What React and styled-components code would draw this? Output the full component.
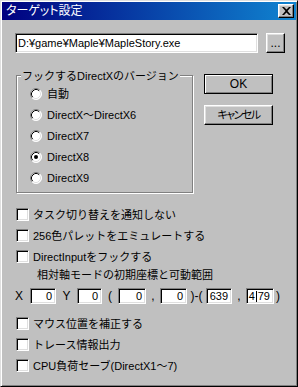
import React from "react";
import styled, { createGlobalStyle } from "styled-components";

const GlobalStyle = createGlobalStyle`
  html, body {
    margin: 0;
    padding: 0;
    background: #c0c0c0;
  }
  body {
    font-family: "Liberation Sans", "Noto Sans CJK JP", sans-serif;
    font-size: 11px;
    color: #000;
  }
`;

const Window = styled.div`
  box-sizing: border-box;
  width: 298px;
  height: 387px;
  padding: 1px;
  background: #c0c0c0;
  border: 1px solid;
  border-color: #dfdfdf #000 #000 #dfdfdf;
  box-shadow: inset 1px 1px #fff, inset -1px -1px #808080;
  display: flex;
  flex-direction: column;
`;

const TitleBar = styled.div`
  height: 18px;
  padding: 0 2px;
  display: flex;
  align-items: center;
  justify-content: space-between;
  background: linear-gradient(to right, #000080, #1084d0);
`;

const TitleText = styled.span`
  color: #fff;
  font-size: 12px;
  line-height: 18px;
  padding-left: 2px;
  font-feature-settings: "palt" 1;
`;

const raised = `
  border: 1px solid;
  border-color: #fff #000 #000 #fff;
  box-shadow: inset -1px -1px #808080, inset 1px 1px #dfdfdf;
  background: #c0c0c0;
`;

const sunken = `
  border: 1px solid;
  border-color: #808080 #fff #fff #808080;
  box-shadow: inset 1px 1px #000, inset -1px -1px #dfdfdf;
  background: #fff;
`;

const CloseBox = styled.div`
  box-sizing: border-box;
  width: 16px;
  height: 14px;
  ${raised}
  display: flex;
  align-items: center;
  justify-content: center;
`;

const Body = styled.div`
  padding: 13px 0 0 13px;
  display: flex;
  flex-direction: column;
`;

const PathRow = styled.div`
  display: flex;
  gap: 8px;
  height: 20px;
`;

const PathField = styled.div`
  box-sizing: border-box;
  width: 243px;
  height: 20px;
  ${sunken}
  padding-left: 2px;
  line-height: 18px;
  white-space: nowrap;
`;

const Button = styled.div`
  box-sizing: border-box;
  width: ${(p) => p.w}px;
  height: 20px;
  ${raised}
  ${(p) =>
    p.primary &&
    `
    border-color: #000;
    box-shadow: inset 1px 1px #fff, inset -1px -1px #808080;
  `}
  display: flex;
  align-items: center;
  justify-content: center;
  line-height: 16px;
  font-size: 12px;
`;

const NarrowText = styled.span`
  font-size: 11px;
  letter-spacing: -1.5px;
  font-feature-settings: "palt" 1;
`;

const MidRow = styled.div`
  display: flex;
  align-items: flex-start;
  margin-top: 21px;
`;

const GroupBox = styled.div`
  position: relative;
  box-sizing: border-box;
  width: 177px;
  height: 118px;
  margin: 1px 0 0 1px;
  padding: 7px 0 0 13px;
  border: 1px solid #808080;
  box-shadow: inset 1px 1px #fff, 1px 1px #fff;
`;

const Legend = styled.span`
  position: absolute;
  top: -8px;
  left: 4px;
  padding: 0 1px;
  background: #c0c0c0;
  line-height: 16px;
  white-space: nowrap;
`;

const RadioRow = styled.div`
  height: 21px;
  display: flex;
  align-items: center;
  gap: 5px;
  line-height: 14px;
`;

const ButtonCol = styled.div`
  margin-left: 11px;
  display: flex;
  flex-direction: column;
  gap: 11px;
`;

const CheckList = styled.div`
  margin-top: ${(p) => p.top}px;
  display: flex;
  flex-direction: column;
`;

const CheckRow = styled.div`
  height: 21px;
  margin-left: 1px;
  display: flex;
  align-items: center;
  gap: 4px;
  line-height: 14px;
  white-space: nowrap;
`;

const Box = styled.div`
  box-sizing: border-box;
  width: 13px;
  height: 13px;
  ${sunken}
`;

const RangeLabel = styled.div`
  height: 16px;
  line-height: 16px;
  margin-left: 22px;
`;

const CoordRow = styled.div`
  margin-top: 5px;
  height: 16px;
  display: flex;
  align-items: center;
`;

const Sep = styled.span`
  width: ${(p) => p.w}px;
  text-align: ${(p) => p.align || "center"};
  line-height: 16px;
  font-size: 12px;
`;

const Field = styled.div`
  box-sizing: border-box;
  width: ${(p) => p.w}px;
  height: 16px;
  ${sunken}
  padding-right: 3px;
  text-align: right;
  line-height: 14px;
`;

const Caret = styled.span`
  display: inline-block;
  width: 1px;
  height: 11px;
  margin: 0 1px;
  background: #000;
  vertical-align: -2px;
`;

const Radio = ({ checked }) => (
  <svg width="12" height="12" viewBox="0 0 12 12">
    <circle cx="6" cy="6" r="5.5" fill="#fff" />
    <path d="M2.11 9.89 A5.5 5.5 0 0 1 9.89 2.11" fill="none" stroke="#808080" />
    <path d="M2.82 9.18 A4.5 4.5 0 0 1 9.18 2.82" fill="none" stroke="#000" />
    <path d="M9.89 2.11 A5.5 5.5 0 0 1 2.11 9.89" fill="none" stroke="#fff" />
    <path d="M9.18 2.82 A4.5 4.5 0 0 1 2.82 9.18" fill="none" stroke="#dfdfdf" />
    {checked && <circle cx="6" cy="6" r="2" fill="#000" />}
  </svg>
);

const versions = [
  "自動",
  "DirectX～DirectX6",
  "DirectX7",
  "DirectX8",
  "DirectX9",
];

const Check = ({ children }) => (
  <CheckRow>
    <Box />
    <span>{children}</span>
  </CheckRow>
);

export default function App() {
  return (
    <>
      <GlobalStyle />
      <Window>
        <TitleBar>
          <TitleText>ターゲット設定</TitleText>
          <CloseBox>
            <svg width="9" height="8" viewBox="0 0 9 8">
              <path d="M0 0h2l2.5 2.6L7 0h2L5.5 4 9 8H7L4.5 5.4 2 8H0l3.5-4z" fill="#000" />
            </svg>
          </CloseBox>
        </TitleBar>
        <Body>
          <PathRow>
            <PathField>D:¥game¥Maple¥MapleStory.exe</PathField>
            <Button w={19}>...</Button>
          </PathRow>

          <MidRow>
            <GroupBox>
              <Legend>フックするDirectXのバージョン</Legend>
              {versions.map((v) => (
                <RadioRow key={v}>
                  <Radio checked={v === "DirectX8"} />
                  <span>{v}</span>
                </RadioRow>
              ))}
            </GroupBox>
            <ButtonCol>
              <Button w={69} primary>
                OK
              </Button>
              <Button w={69}>
                <NarrowText>キャンセル</NarrowText>
              </Button>
            </ButtonCol>
          </MidRow>

          <CheckList top={11}>
            <Check>タスク切り替えを通知しない</Check>
            <Check>256色パレットをエミュレートする</Check>
            <Check>DirectInputをフックする</Check>
          </CheckList>

          <RangeLabel>相対軸モードの初期座標と可動範囲</RangeLabel>
          <CoordRow>
            <Sep w={15} align="left">X</Sep>
            <Field w={26}>0</Field>
            <Sep w={21}>Y</Sep>
            <Field w={25}>0</Field>
            <Sep w={16}>(</Sep>
            <Field w={28}>0</Field>
            <Sep w={14}>,</Sep>
            <Field w={27}>0</Field>
            <Sep w={19}>)-(</Sep>
            <Field w={26}>639</Field>
            <Sep w={14}>,</Sep>
            <Field w={28}>
              4<Caret />79
            </Field>
            <Sep w={8}>)</Sep>
          </CoordRow>

          <CheckList top={9}>
            <Check>マウス位置を補正する</Check>
            <Check>トレース情報出力</Check>
            <Check>CPU負荷セーブ(DirectX1～7)</Check>
          </CheckList>
        </Body>
      </Window>
    </>
  );
}
